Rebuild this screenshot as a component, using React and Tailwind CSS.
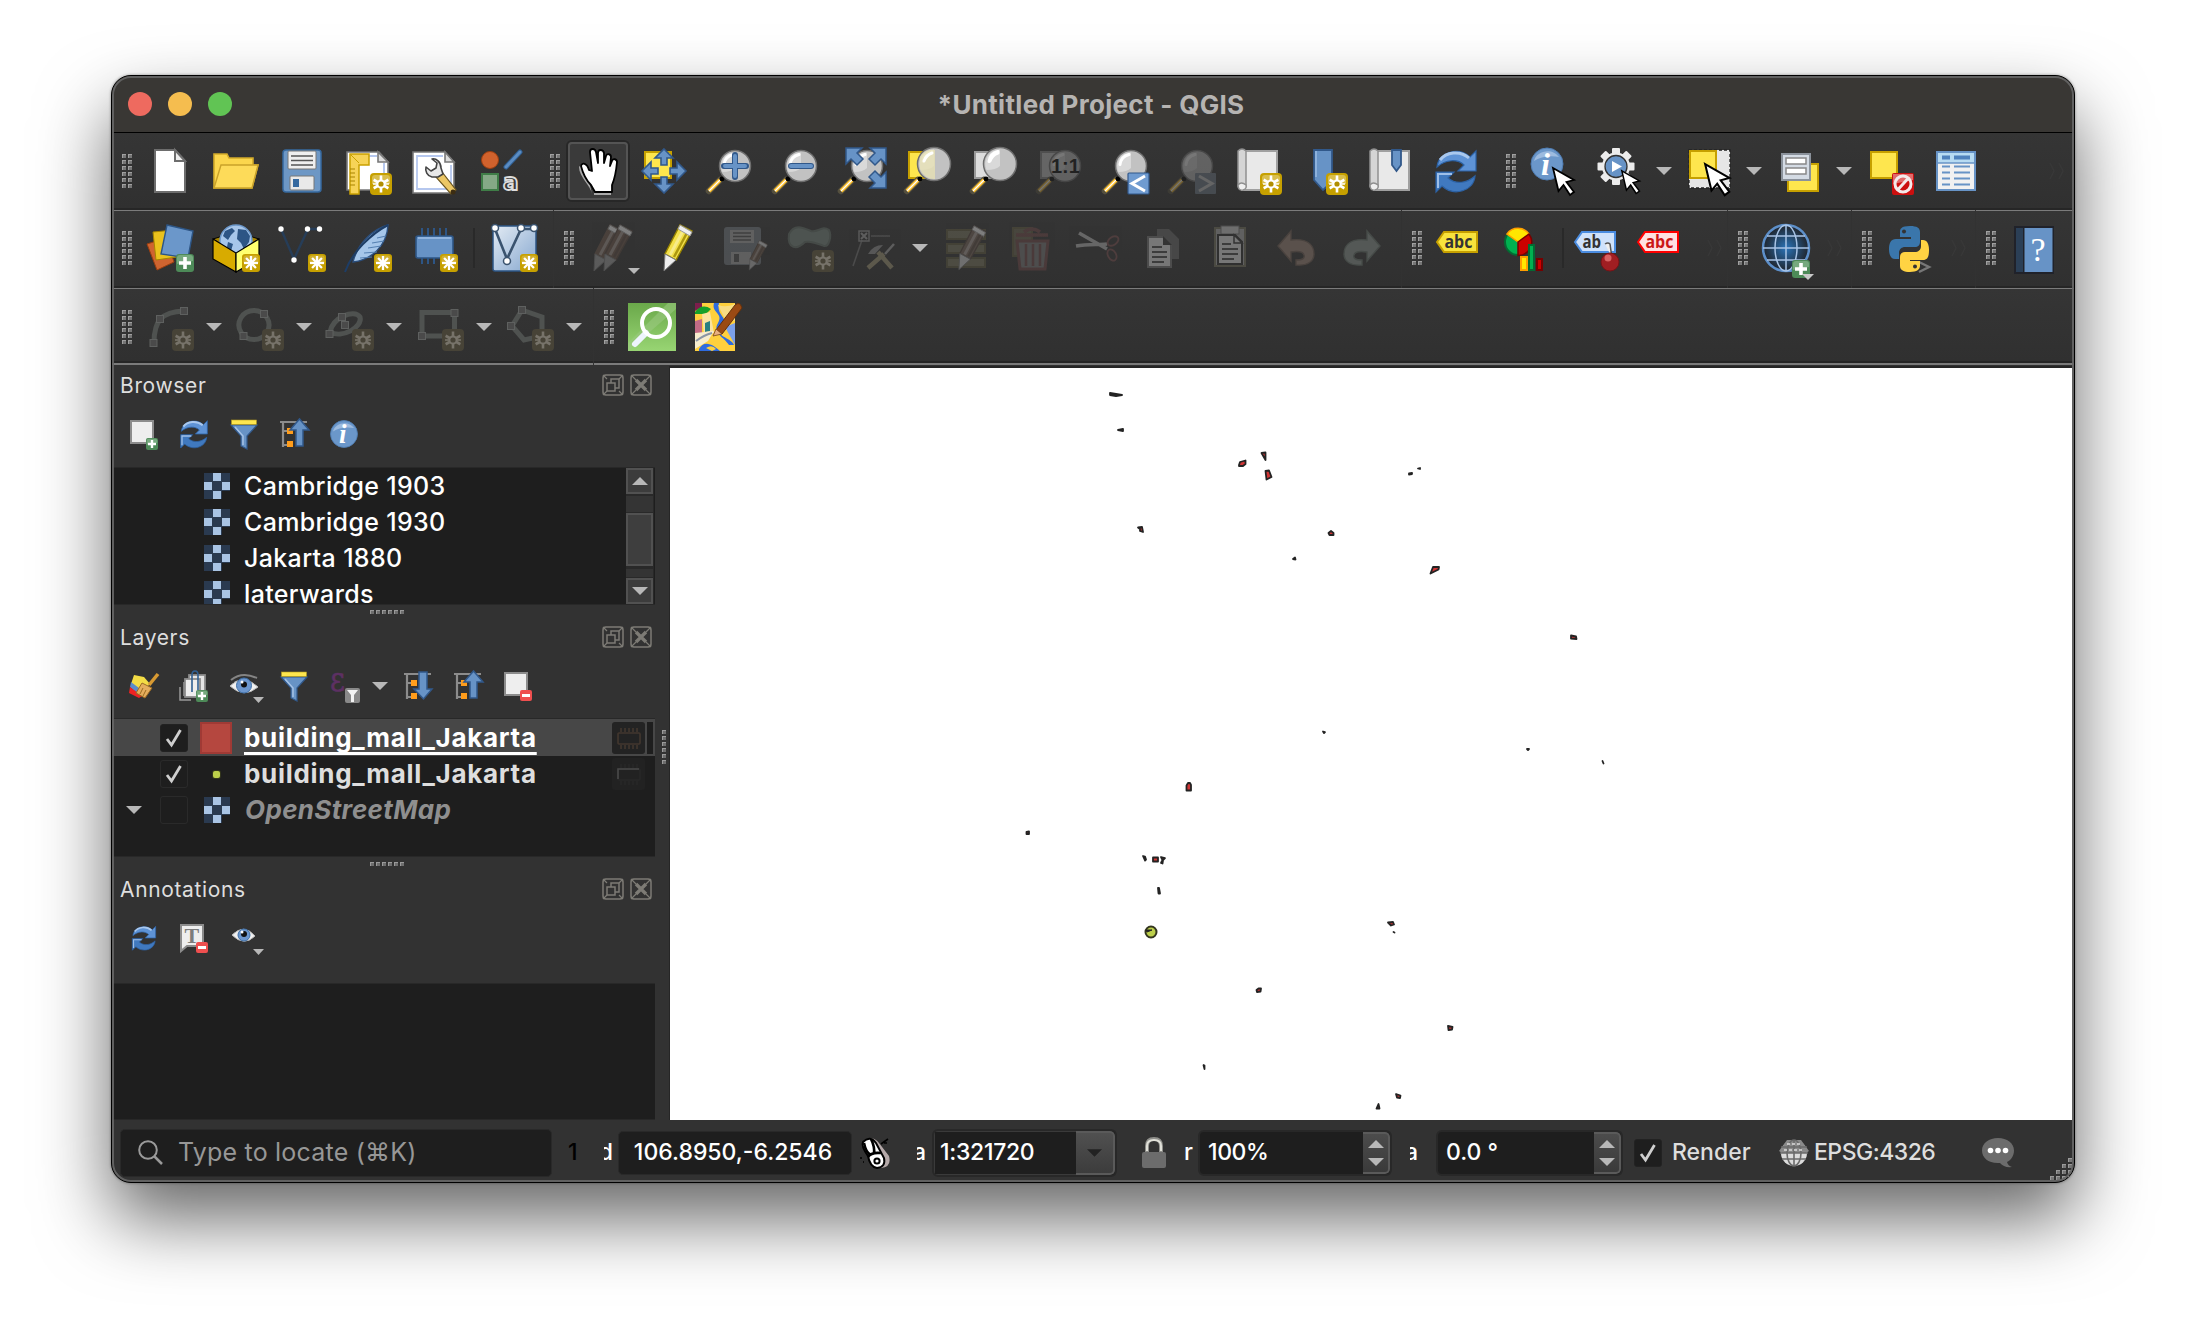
import React from "react";

/* ---------- shared drawing helpers ---------- */

function Svg({ size = 48, box = 48, dim, children }) {
  return (
    <svg width={size} height={size} viewBox={`0 0 ${box} ${box}`} fill="none" opacity={dim ? dim : 1} className="shrink-0 overflow-visible">
      {children}
    </svg>
  );
}

function Star({ x = 26, y = 26, dull }) {
  const c = dull ? "#77736a" : "#fff";
  return (
    <g transform={`translate(${x} ${y})`}>
      <rect width="22" height="22" rx="4" fill={dull ? "#474337" : "#c6a000"} />
      {!dull && <path d="M2 11V5q0-3 3-3h12q3 0 3 3v6z" fill="#d9be4c" />}
      {[0, 60, 120].map((a) => (
        <path key={a} d="M11 2.5V19.5" stroke={c} strokeWidth="2.6" transform={`rotate(${a} 11 11)`} />
      ))}
      <path d="M3 11H19" stroke={c} strokeWidth="1.6" />
      <circle cx="11" cy="11" r="3.6" fill={dull ? "#474337" : "#b08e00"} stroke={c} strokeWidth="2" />
    </g>
  );
}

function Asterisk() {
  return (
    <g transform="translate(30 30)">
      <rect width="18" height="18" rx="3" fill="#c6a000" />
      <path d="M1.5 9V4q0-2.500 2.500-2.500h10q2.500 0 2.500 2.500v5z" fill="#d2b02e" />
      {[0, 45, 90, 135].map((a) => (
        <path key={a} d="M9 2V16" stroke="#fff" strokeWidth="2.300" transform={`rotate(${a} 9 9)`} />
      ))}
    </g>
  );
}

function PlusBadge({ x = 30, y = 30, s = 18 }) {
  return (
    <g transform={`translate(${x} ${y}) scale(${s / 18})`}>
      <rect width="18" height="18" rx="3" fill="#4d8a58" />
      <path d="M1 10V4q0-3 3-3h10q3 0 3 3v3z" fill="#76a97e" />
      <path d="M9 3V15M3 9H15" stroke="#fff" strokeWidth="3.600" />
    </g>
  );
}

function MinusBadge({ x = 20, y = 20 }) {
  return (
    <g transform={`translate(${x} ${y})`}>
      <rect width="12" height="11" rx="2" fill="#ef4f4f" />
      <path d="M2 5.500H10" stroke="#fff" strokeWidth="3" />
    </g>
  );
}

function Lens({ cx = 29, cy = 19, r = 15.500, handle = "M3 44L14 33" }) {
  return (
    <g>
      <path d={handle} stroke="#55503f" strokeWidth="6.500" strokeLinecap="round" />
      <path d={handle} stroke="#fbbf2d" strokeWidth="4" />
      <path d={handle} stroke="#fff" strokeWidth="1.200" />
      <circle cx="16" cy="32" r="2.400" fill="#000" />
      <circle cx={cx} cy={cy} r={r} fill="#c2c2c2" stroke="#6e6e6e" strokeWidth="1.500" />
      <path d={`M${cx} ${cy - r + 2}a${r - 2} ${r - 2} 0 0 0 -${r - 3} ${r + 4}q${r - 7} 0 ${r - 3} -4z`} fill="#e2e2e2" opacity=".7" />
      <path d={`M${cx - 2} ${cy - r + 4}q-8 2 -9 10`} stroke="#fff" strokeWidth="3" strokeLinecap="round" />
    </g>
  );
}

function Cursor({ t = "translate(21 20)" }) {
  return (
    <path transform={t} d="M1 1L22 13L14.500 15L22 25L18 28L11.500 18L6.500 24Z" fill="#fff" stroke="#000" strokeWidth="1.800" />
  );
}

function Swirl({ size = 48 }) {
  return (
    <Svg size={size}>
      <path d="M5 20C6 6 26-1 38 10l6-6v20H26l6-6C26 12 14 12 5 20z" fill="#5e93d6" stroke="#2c62a5" strokeWidth="1.200" />
      <path d="M8 13C14 5 28 3 37 11" stroke="#a9c8ee" strokeWidth="3" />
      <path d="M43 29C42 44 22 50 10 39l-6 6V25h18l-6 6C24 38 35 36 43 29z" fill="#4079bf" stroke="#2c62a5" strokeWidth="1.200" />
      <path d="M6 41V27H20" stroke="#9ebfe8" strokeWidth="2" />
    </Svg>
  );
}

function Caret({ className = "w-6 pr-[2px]", small }) {
  return (
    <div className={`flex shrink-0 justify-center ${className}`}>
      <svg width={small ? 12 : 16} height={small ? 6 : 8} viewBox="0 0 16 8">
        <path d="M0 0H16L8 8Z" fill="#b8b8b8" />
      </svg>
    </div>
  );
}

function Grip() {
  return (
    <div className="mr-[5px] ml-[10px] grid shrink-0 grid-cols-2 gap-x-[2px] gap-y-[2px]">
      {Array.from({ length: 12 }).map((_, i) => (
        <i key={i} className="size-1 border-t border-l border-[#a0a0a0] bg-[#767676]" />
      ))}
    </div>
  );
}

function Dots({ vertical }) {
  return (
    <div className={vertical ? "flex flex-col gap-[2px]" : "flex gap-[2px]"}>
      {Array.from({ length: 6 }).map((_, i) => (
        <i key={i} className="size-1 border-t border-l border-[#9a9a9a] bg-[#6e6e6e]" />
      ))}
    </div>
  );
}

function Toolbar({ className, children, first, last, pad = "" }) {
  return (
    <div className={`flex flex-col ${className}`}>
      <div className={`h-px shrink-0 ${first ? "bg-black" : "bg-[#7b7b7b]"}`} />
      <div className={`flex min-h-0 flex-1 items-center overflow-hidden bg-linear-to-b from-[#353535] to-[#303030] ${pad}`}>{children}</div>
      <div className="h-[2px] shrink-0 bg-[#262626]" />
      {last && <div className="h-[2px] shrink-0 bg-[#7b7b7b]" />}
    </div>
  );
}

function Tool({ children, className = "w-[66px]" }) {
  return <div className={`relative flex shrink-0 justify-center ${className}`}>{children}</div>;
}

function More({ className }) {
  return (
    <svg width="20" height="20" viewBox="0 0 20 20" className={`shrink-0 ${className}`} fill="none">
      <path d="M3 2l4 8-4 8M12 2l4 8-4 8" stroke="#383838" strokeWidth="1.500" />
    </svg>
  );
}

function Sep({ className = "w-[14px]" }) {
  return (
    <div className={`flex h-10 shrink-0 justify-center ${className}`}>
      <div className="w-[2px] bg-[#292929]" />
    </div>
  );
}

/* ---------- row one icons ---------- */

const NewDoc = () => (
  <Svg>
    <path d="M9 3H29L39 14V45H9Z" fill="#fff" stroke="#6d6d6d" strokeWidth="2" />
    <path d="M29 3V14H39Z" fill="#eee" stroke="#6d6d6d" strokeWidth="2" />
  </Svg>
);
const Folder = () => (
  <Svg>
    <path d="M2 41V7H15L17 11H41V18H46L40 41Z" fill="#fbd64d" stroke="#d2aa2a" strokeWidth="1.600" />
    <path d="M2 41L9 18H46L40 41Z" fill="#fddb59" stroke="#c9a22a" strokeWidth="1.400" />
  </Svg>
);
const Floppy = () => (
  <Svg>
    <rect x="5" y="3" width="38" height="42" rx="3" fill="#6d97c5" stroke="#36699f" strokeWidth="1.500" />
    <rect x="10" y="4" width="28" height="18" rx="1" fill="#efefef" stroke="#777" />
    <path d="M13 9H35M13 13.500H35M13 18H35" stroke="#555" strokeWidth="1.600" />
    <rect x="12" y="29" width="24" height="14" rx="1" fill="#e9e9e9" stroke="#777" />
    <rect x="15" y="32" width="6" height="8" fill="#36699f" />
  </Svg>
);
const NewLayout = () => (
  <Svg>
    <path d="M3 5H35L44 15V43H3Z" fill="#fff" stroke="#777" strokeWidth="1.600" />
    <path d="M8 9H33M40 16V30" stroke="#b5c7ee" strokeWidth="2" />
    <path d="M34 5V15H44Z" fill="#ddd" stroke="#777" strokeWidth="1.600" />
    <path d="M6 7H25V18H15V47H6Z" fill="#f6d357" stroke="#c9a000" strokeWidth="1.500" />
    <path d="M6 22h5M6 26h5M6 30h5M6 34h5M6 38h5" stroke="#a88400" strokeWidth="1.200" />
    <path d="M7 8l8 8" stroke="#c9a000" />
    <Star />
  </Svg>
);
const LayoutManager = () => (
  <Svg>
    <path d="M3 5H35L44 15V46H3Z" fill="#fff" stroke="#777" strokeWidth="1.600" />
    <path d="M33 9H7V42H41V18" stroke="#b5c7ee" strokeWidth="1.800" />
    <path d="M35 5V15H44Z" fill="#ddd" stroke="#777" strokeWidth="1.600" />
    <path d="M25 29L32 25L46 43L41 47Z" fill="#ecc765" stroke="#6c5722" strokeWidth="1.200" />
    <path d="M22 12C26 11 31 15 31 21L33 27L28 30L22 30C17 29 15 24 16 20L21 24L26 21L27 16Z" fill="#e8e8e8" stroke="#444" strokeWidth="1.600" strokeLinejoin="round" />
    <circle cx="43" cy="45" r="2.500" fill="#3c2d12" />
  </Svg>
);
const StyleManager = () => (
  <Svg>
    <circle cx="14" cy="13" r="8.500" fill="#d1622d" stroke="#9c3e0f" />
    <path d="M30 20L44 5" stroke="#2f5f93" strokeWidth="5" strokeLinecap="round" />
    <path d="M30 20L44 5" stroke="#5b8cc2" strokeWidth="3" strokeLinecap="round" />
    <rect x="6" y="27" width="16" height="16" fill="#85a986" stroke="#3f7d47" strokeWidth="2" />
    <text x="27" y="43" fontFamily="DejaVu Sans" fontWeight="700" fontSize="23" fill="#3a3a3a" stroke="#ddd" strokeWidth="1.800">a</text>
  </Svg>
);
const Hand = () => (
  <Svg>
    <g transform="translate(3 -1)">
      <path d="M15 47C14 39 2 30 2 20c2-4 6-2 8 5" fill="#aaa" transform="translate(0 1)" />
      <path d="M18 46L14 39C10 35 6 28 4 20c1-4 6-3 8 4l3 1-2-19c0-4 5-4 6 0l2 11V7c0-4 5-4 6 0v10l2-7c1-3 5-2 5 1l-1 9 2-5c1-3 5-2 5 1-1 11-2 16-5 23v7Z" fill="#fff" stroke="#000" strokeWidth="1.800" strokeLinejoin="round" />
      <path d="M17 48H34" stroke="#aaa" strokeWidth="2" />
    </g>
  </Svg>
);
const ArrowHead = ({ r, cx = 24, cy = 24 }) => (
  <path transform={`rotate(${r} ${cx} ${cy})`} d={`M${cx} ${cy - 22}l9 9h-6v7h-6v-7h-6z`} fill="#6793c6" stroke="#31588a" strokeWidth="1.600" />
);
const PanSel = () => (
  <Svg>
    <rect x="5" y="5" width="26" height="26" fill="#fee64e" stroke="#c6a000" strokeWidth="2" />
    <g>
      <ArrowHead r={0} /><ArrowHead r={90} /><ArrowHead r={180} /><ArrowHead r={270} />
    </g>
  </Svg>
);
const ZoomIn = () => (
  <Svg>
    <Lens />
    <path d="M29 8V30M18 19H40" stroke="#31588a" strokeWidth="6" strokeLinecap="round" />
    <path d="M29 9V29M19 19H39" stroke="#6793c6" strokeWidth="4" strokeLinecap="round" />
  </Svg>
);
const ZoomOut = () => (
  <Svg>
    <Lens />
    <path d="M19 19H39" stroke="#31588a" strokeWidth="6" strokeLinecap="round" />
    <path d="M19 19H39" stroke="#6793c6" strokeWidth="4" strokeLinecap="round" />
  </Svg>
);
const DiagArrow = ({ t }) => (
  <path transform={t} d="M0 0H16L11 5L17 11L11 17L5 11L0 16Z" fill="#6793c6" stroke="#31588a" strokeWidth="1.500" />
);
const ZoomFull = () => (
  <Svg>
    <Lens />
    <DiagArrow t="translate(8 1)" />
    <DiagArrow t="translate(48 1) scale(-1 1)" />
    <DiagArrow t="translate(48 41) scale(-1 -1)" />
  </Svg>
);
const ZoomSel = ({ gray }) => (
  <Svg>
    <rect x="5" y="5" width="26" height="26" fill={gray ? "#ddd" : "#fee64e"} stroke={gray ? "#999" : "#c6a000"} strokeWidth="2" />
    <Lens cx={30} cy={17} r={16.500} />
    {!gray && <path d="M16 10a15 15 0 0 1 15-7V32a15 15 0 0 1-15-10z" fill="#e6e0b4" opacity=".8" />}
    <path d="M20 14q2-6 8-8" stroke="#fff" strokeWidth="3" strokeLinecap="round" />
  </Svg>
);
const ZoomNative = () => (
  <Svg dim={0.33}>
    <rect x="5" y="5" width="26" height="26" fill="#ccc" stroke="#888" strokeWidth="2" />
    <Lens />
    <text x="15" y="26" fontFamily="Liberation Sans" fontWeight="700" fontSize="20" fill="#000">1:1</text>
  </Svg>
);
const ZoomLast = () => (
  <Svg>
    <Lens />
    <rect x="26" y="26" width="21" height="21" rx="1" fill="#6f9bd0" stroke="#31588a" strokeWidth="1.200" />
    <path d="M43 29L30 36.500L43 44" stroke="#fff" strokeWidth="3" />
  </Svg>
);
const ZoomNext = () => (
  <Svg dim={0.33}>
    <Lens />
    <rect x="27" y="26" width="21" height="21" rx="1" fill="#73808f" />
    <path d="M31 29L44 36.500L31 44" stroke="#ccc" strokeWidth="3" />
  </Svg>
);
const Scroll = () => (
  <g>
    <path d="M8 4H43V43H8Z" fill="#e9e9e9" stroke="#a0a0a0" strokeWidth="2" />
    <path d="M4 4q4-4 8 0V39q-4-4-8 0Z" fill="#d5d5d5" stroke="#8f8f8f" strokeWidth="1.500" />
    <path d="M4 38q0 6 5 5q4-1 3-5q-5-4-8 0Z" fill="#efefef" stroke="#8f8f8f" strokeWidth="1.400" />
  </g>
);
const NewMap = () => <Svg><Scroll /><Star /></Svg>;
const NewBookmark = () => (
  <Svg>
    <path d="M14 3H32V35L23 43L14 33Z" fill="#6793c6" stroke="#31588a" strokeWidth="1.800" />
    <path d="M16 4V30" stroke="#8db1dc" strokeWidth="2" />
    <Star />
  </Svg>
);
const ShowBookmarks = () => (
  <Svg>
    <Scroll />
    <path d="M26 3H35V18L30.500 24L26 18Z" fill="#6793c6" stroke="#31588a" strokeWidth="1.800" />
  </Svg>
);
const InfoDisc = () => (
  <g>
    <circle cx="17" cy="17" r="16" fill="#6b97ca" stroke="#4f7db3" />
    <path d="M4 14C6 4 22 0 29 10C20 8 10 10 4 14z" fill="#9dbbdf" />
    <text x="11" y="28" fontFamily="Liberation Serif" fontStyle="italic" fontWeight="700" fontSize="32" fill="#fff">i</text>
  </g>
);
const Identify = () => <Svg><InfoDisc /><Cursor t="translate(22 20)" /></Svg>;
const GearPlay = () => (
  <Svg>
    {[0, 45, 90, 135].map((a) => (
      <rect key={a} x="16" y="1" width="8" height="37" rx="1" fill="#ececec" transform={`rotate(${a} 20 19.500)`} />
    ))}
    <circle cx="20" cy="19.500" r="14" fill="#ececec" />
    <circle cx="20" cy="19.500" r="11" fill="#6793c6" stroke="#333" strokeWidth="1.300" />
    <path d="M16 14L26 19.500L16 25Z" fill="#fff" />
    <Cursor t="translate(25 23) scale(.84)" />
  </Svg>
);
const SelectArea = () => (
  <Svg>
    <rect x="3" y="3" width="41" height="38" fill="#e6e6e6" stroke="#222" strokeWidth="1.300" strokeDasharray="3 2" />
    <rect x="4" y="4" width="26" height="27" fill="#fee64e" stroke="#c6a000" strokeWidth="2" />
    <Cursor t="translate(18 16) scale(1.150)" />
  </Svg>
);
const SelectByValue = () => (
  <Svg>
    <rect x="12" y="17" width="30" height="27" fill="#fee64e" stroke="#c6a000" strokeWidth="2" />
    <rect x="6" y="7" width="28" height="26" fill="#d4dbe4" stroke="#8b929b" strokeWidth="2" />
    <rect x="10" y="11" width="20" height="6" fill="#fff" stroke="#888" strokeWidth="1.500" />
    <rect x="10" y="21" width="20" height="6" fill="#fff" stroke="#888" strokeWidth="1.500" />
  </Svg>
);
const Deselect = () => (
  <Svg>
    <rect x="5" y="5" width="26" height="26" fill="#fee64e" stroke="#c6a000" strokeWidth="2" />
    <rect x="26" y="26" width="22" height="22" rx="2" fill="#cc0f0f" />
    <path d="M27 37V27H47V33z" fill="#e26a6a" />
    <circle cx="37" cy="37" r="8" stroke="#f3eaea" strokeWidth="3" />
    <path d="M32 42.500L42 31.500" stroke="#f3eaea" strokeWidth="3" />
  </Svg>
);
const Table = () => (
  <Svg>
    <rect x="5" y="5" width="38" height="38" fill="#f1f1f1" stroke="#6793c6" strokeWidth="2" />
    <rect x="6" y="6" width="36" height="10" fill="#b7dbf2" />
    <path d="M4 16H44" stroke="#6793c6" strokeWidth="1.500" />
    <path d="M10 10.500h8M22 10.500h16" stroke="#4f82bd" strokeWidth="4" />
    {[19.500, 25.500, 31.500, 37.500].map((y) => (
      <path key={y} d={`M10 ${y}h8M22 ${y}h16`} stroke="#6793c6" strokeWidth="2" />
    ))}
  </Svg>
);

/* ---------- row two icons ---------- */

const AddLayer = () => (
  <Svg>
    <path d="M1 20L20 14L28 38L11 46Z" fill="#cf6430" stroke="#9c3e0f" />
    <path d="M7 8L28 6L31 33L10 36Z" fill="#eac21d" stroke="#a68500" />
    <path d="M21 1L47 7L42 34L15 30Z" fill="#6b97ca" stroke="#2d5585" strokeWidth="1.400" />
    <PlusBadge />
  </Svg>
);
const GeoPackage = () => (
  <Svg>
    <path d="M1 15L24 8L47 15L24 30Z" fill="#a58300" stroke="#000" />
    <circle cx="24" cy="17" r="16" fill="#a7c6ea" stroke="#6b97ca" strokeWidth="1.400" />
    <path d="M13 7l7-3 3 3-4 4-3 5-5-4zM26 5l8 1 4 6-1 6-5 7-3-6-4-4zM16 18l5 2-2 7-4-4z" fill="#2d5585" />
    <path d="M1 15L24 29V48L1 35Z" fill="#d8ab00" stroke="#000" strokeWidth="1.200" />
    <path d="M47 15L24 29V48L47 35Z" fill="#ffff6f" stroke="#000" strokeWidth="1.200" />
    <Asterisk />
  </Svg>
);
const Shapefile = () => (
  <Svg>
    <path d="M3 5L16 35L30 5H41" stroke="#263d58" strokeWidth="2.400" />
    {[[3, 5], [16, 36], [29.500, 5], [41.500, 5]].map(([x, y]) => (
      <circle key={x} cx={x} cy={y} r="2.700" fill="#fff" />
    ))}
    <Asterisk />
  </Svg>
);
const Feather = () => (
  <Svg>
    <path d="M44 1C30 5 14 18 9 38C27 36 43 22 44 1Z" fill="#a5c6ea" stroke="#2b4e7c" strokeWidth="1.400" />
    <path d="M44 1C27 10 8 28 1 48" stroke="#1d3d66" strokeWidth="2" />
    <path d="M16 34l12 -1M20 29l13-1M24 24l13-2M28 19l12-2M33 14l9-2" stroke="#5580b2" strokeWidth="1.200" />
    <Asterisk />
  </Svg>
);
const Memory = () => (
  <Svg>
    <path d="M12 4V12M18 4V12M24 4V12M30 4V12M36 4V12M12 34V40M18 34V40M24 34V40" stroke="#2d5585" strokeWidth="2" />
    <rect x="6" y="12" width="37" height="22" rx="2" fill="#6793c6" stroke="#2d5585" strokeWidth="1.600" />
    <path d="M8 14H41" stroke="#90b4df" strokeWidth="2" />
    <Asterisk />
  </Svg>
);
const VirtualLayer = () => (
  <Svg>
    <defs>
      <linearGradient id="vl" x1="0" y1="0" x2="1" y2="1"><stop stopColor="#e3ebf4" /><stop offset="1" stopColor="#85a7cf" /></linearGradient>
    </defs>
    <rect x="3" y="2" width="43" height="45" rx="2" fill="url(#vl)" stroke="#2d5585" strokeWidth="1.500" />
    <path d="M5 5L17 35L31 5H44" stroke="#3a536f" strokeWidth="2.600" />
    {[[5, 4], [17, 37], [31, 4], [44, 4]].map(([x, y]) => (
      <circle key={x} cx={x} cy={y} r="3.500" fill="#fff" stroke="#3a536f" strokeWidth="1.500" />
    ))}
    <Asterisk />
  </Svg>
);
const PencilShape = ({ t, body, tip = "#ccc", edge }) => (
  <g transform={t}>
    <path d="M18 1L30 7L14 36L3 30Z" fill={body} stroke={edge} strokeWidth="1.400" />
    <path d="M22 5L8 31" stroke="#fff" strokeOpacity=".35" strokeWidth="3" />
    <path d="M26 7L12 33" stroke={edge} strokeOpacity=".8" strokeWidth="2.500" />
    <path d="M18 1L30 8L28 12L16 5Z" fill="#eee" stroke="#999" />
    <path d="M3 30L14 36L2 47Z" fill={tip} stroke="#777" />
  </g>
);
const Pencils = () => (
  <Svg dim={0.4}>
    <PencilShape t="translate(4 0)" body="#6b564a" edge="#6b564a" tip="#999" />
    <PencilShape t="translate(14 0)" body="#6b564a" edge="#54453d" tip="#999" />
  </Svg>
);
const Pencil = () => (
  <Svg><PencilShape t="translate(8 0)" body="#f3e04a" edge="#9a8500" tip="#eee" /></Svg>
);
const SaveEdits = () => (
  <Svg dim={0.35}>
    <rect x="4" y="3" width="37" height="38" rx="3" fill="#7d848c" />
    <rect x="10" y="6" width="24" height="13" fill="#b4b4b4" />
    <path d="M13 9H31M13 12.500H31M13 16H31" stroke="#555" strokeWidth="1.400" />
    <rect x="11" y="28" width="20" height="12" fill="#b4b4b4" />
    <rect x="14" y="30" width="5" height="8" fill="#555" />
    <PencilShape t="translate(28 16) scale(.64)" body="#7a6353" edge="#5c4a3e" />
  </Svg>
);
const AddFeature = () => (
  <Svg>
    <path d="M3 10C8 0 16 3 25 7C32 9 36 1 43 6C46 12 43 23 38 22C30 19 25 17 19 18C10 27 1 24 3 10Z" fill="#4d5350" stroke="#454a47" strokeWidth="2" />
    <Star dull />
  </Svg>
);
const VertexTool = () => (
  <Svg dim={0.36}>
    <path d="M1 42L10 16M19 12H38" stroke="#777" strokeWidth="1.600" />
    <rect x="7" y="7" width="10" height="10" stroke="#999" strokeWidth="1.500" />
    <path d="M9 9l6 6M15 9l-6 6" stroke="#aaa" strokeWidth="2" />
    <path d="M16 44L32 30M40 44L26 28" stroke="#a89e7a" strokeWidth="4.500" />
    <path d="M16 30q5-9 15-9l-8 9z" fill="#999" />
    <path d="M33 30L42 20" stroke="#aaa" strokeWidth="2.500" />
  </Svg>
);
const MultiEdit = () => (
  <Svg dim={0.4}>
    {[6, 20, 34].map((y) => <rect key={y} x="5" y={y} width="38" height="9" fill="#77735c" stroke="#5c583e" strokeWidth="2" />)}
    <PencilShape t="translate(15 1) scale(.95)" body="#77655a" edge="#54453d" />
  </Svg>
);
const Trash = () => (
  <Svg dim={0.4}>
    <path d="M5 4H24V32H5Z" fill="#66634f" stroke="#5c583e" strokeWidth="2" />
    <path d="M8 11H40M16 8q8-6 16 0" stroke="#6e4646" strokeWidth="3.500" />
    <path d="M9 17H40L37 45H12Z" fill="#777" stroke="#6e4646" strokeWidth="3" />
    <path d="M18 20V42M25 20V42M32 20V42" stroke="#6e4646" strokeWidth="2.500" />
  </Svg>
);
const Scissors = () => (
  <Svg dim={0.38}>
    <path d="M5 9L33 25M2 22C14 20 24 21 33 20" stroke="#bbb" strokeWidth="3.500" />
    <ellipse cx="39" cy="17" rx="6" ry="4" transform="rotate(-35 39 17)" stroke="#7d5050" strokeWidth="1.800" />
    <ellipse cx="38" cy="31" rx="6" ry="4" transform="rotate(60 38 31)" stroke="#7d5050" strokeWidth="1.800" />
  </Svg>
);
const Copy = () => (
  <Svg>
    <path d="M17 5H29L39 15V35H17Z" fill="#474747" />
    <path d="M8 13H23L31 21V43H8Z" fill="#777" stroke="#4c4c4c" strokeWidth="2" />
    <path d="M23 12V21H32Z" fill="#333" />
    <path d="M12 23H22M12 28H27M12 33H27M12 38H24" stroke="#3c3c3c" strokeWidth="2" />
  </Svg>
);
const Paste = () => (
  <Svg>
    <rect x="9" y="4" width="30" height="38" fill="#606060" stroke="#4b4a42" strokeWidth="2" />
    <rect x="15" y="2" width="18" height="8" fill="#6e6e6e" stroke="#4c4c4c" />
    <path d="M12 11H29L36 18V40H12Z" fill="#777" stroke="#303030" strokeWidth="2" />
    <path d="M28 11V19H36Z" fill="#777" stroke="#333" strokeWidth="1.500" />
    <path d="M16 20H25M16 25H32M16 30H32M16 35H28" stroke="#3c3c3c" strokeWidth="1.800" />
  </Svg>
);
const UndoShape = ({ c, e }) => (
  <path d="M6 22L19 7V16C34 14 42 20 42 30C42 37 36 42 24 41V36C31 36 33 34 32 31C31 27 26 27 19 28V37Z" fill={c} stroke={e} strokeWidth="1.400" />
);
const Undo = () => <Svg><UndoShape c="#5a514c" e="#4a433f" /></Svg>;
const Redo = () => <Svg><g transform="translate(48 0) scale(-1 1)"><UndoShape c="#545856" e="#464b48" /></g></Svg>;
const Label = ({ fill, edge, color, text }) => (
  <g>
    <path d="M1 18L8 8H41V28H8Z" fill={fill} stroke={edge} strokeWidth="2" />
    <text x="8.500" y="24" fontFamily="Open Sans" fontWeight="700" fontSize="18" fill={color} textLength={text.length * 9.300} lengthAdjust="spacingAndGlyphs">{text}</text>
  </g>
);
const LabelYellow = () => <Svg><Label fill="#f8e33c" edge="#c6a000" color="#333" text="abc" /></Svg>;
const LabelRed = () => <Svg><Label fill="#ffe1e1" edge="#f00" color="#cc1616" text="abc" /></Svg>;
const Diagram = () => (
  <Svg>
    <circle cx="16" cy="18" r="13" fill="#00b150" stroke="#046a33" strokeWidth="2" />
    <path d="M16 18L5 10A13.500 13.500 0 0 1 27 10Z" fill="#ffe600" stroke="#ff9d00" strokeWidth="1.500" />
    <path d="M16 18L27 10A13.500 13.500 0 0 1 16 31.500Z" fill="#c00" stroke="#700" strokeWidth="1.500" />
    <rect x="19" y="33" width="6" height="13" fill="#ffe600" stroke="#ff9d00" strokeWidth="2" />
    <rect x="27" y="21" width="5" height="25" fill="#00b150" stroke="#046a33" strokeWidth="2" />
    <rect x="35" y="35" width="5" height="11" fill="#c00" stroke="#700" strokeWidth="2" />
  </Svg>
);
const LabelPin = () => (
  <Svg>
    <Label fill="#cfe2fb" edge="#4a8ce0" color="#333" text="ab" />
    <path d="M31 20q3-2 5 0l2 14" fill="#eee" stroke="#555" strokeWidth="1.500" />
    <circle cx="36" cy="38" r="9" fill="#a01e22" stroke="#7a1216" />
    <circle cx="34" cy="34" r="3.500" fill="#d86262" />
  </Svg>
);
const Globe = () => (
  <Svg>
    <defs><radialGradient id="gl"><stop stopColor="#2a73b8" /><stop offset="1" stopColor="#20242b" /></radialGradient></defs>
    <circle cx="24" cy="24" r="23" fill="url(#gl)" stroke="#5d8fc9" strokeWidth="2.500" />
    <ellipse cx="24" cy="24" rx="11" ry="23" stroke="#a9c4e6" strokeWidth="1.500" />
    <path d="M24 1V47M1 24H47M5 12H43M5 36H43" stroke="#a9c4e6" strokeWidth="1.500" />
    <PlusBadge x={30} y={36} s={18} />
    <path d="M40 50H52L46 56Z" fill="#c9c9c9" />
  </Svg>
);
const Python = () => (
  <Svg>
    <path d="M33 46l10-5-10-5" stroke="#777" strokeWidth="2.500" transform="translate(0 2)" />
    <path d="M24 2c-9 0-10 3-10 6v5h11v2H10c-5 0-7 4-7 10s2 10 6 10h4v-6c0-4 3-6 6-6h10c3 0 5-2 5-5V8c0-4-3-6-10-6z" fill="#3a76ab" />
    <path d="M35 16v6c0 4-3 6-6 6H19c-3 0-5 2-5 5v9c0 4 4 6 10 6 7 0 10-3 10-6v-5H24v-1h13c5 0 6-4 6-10s-2-10-6-10z" fill="#ffd343" />
    <circle cx="18" cy="7.500" r="2" fill="#333" /><circle cx="29" cy="42.500" r="2" fill="#333" />
  </Svg>
);
const Help = () => (
  <Svg>
    <rect x="4" y="2" width="40" height="48" fill="#20222a" />
    <rect x="6" y="4" width="7" height="44" fill="#2b3f56" />
    <rect x="14.500" y="4" width="28" height="44" fill="#6793c6" />
    <text x="20.500" y="37" fontFamily="Liberation Serif" fontSize="34" fill="#fff">?</text>
  </Svg>
);

/* ---------- row three icons ---------- */

const Node = ({ x, y }) => <rect x={x - 3.500} y={y - 3.500} width="7" height="7" fill="#4a4a4a" stroke="#5e605f" />;
const Shape = ({ d, nodes }) => (
  <Svg>
    <path d={d} stroke="#4f5250" strokeWidth="5" />
    {nodes.map(([x, y]) => <Node key={`${x},${y}`} x={x} y={y} />)}
    <Star dull />
  </Svg>
);
const shapeTools = [
  { d: "M8 40C8 17 16 9 38 8", nodes: [[7.500, 40], [14, 16], [38, 8]] },
  { d: "M18 7.500A15 14.500 0 1 1 17.900 7.500Z", nodes: [[28, 11], [7.500, 33]] },
  { d: "M4 29C7 14 28 6 34 14C37 24 16 36 4 29Z", nodes: [[16, 14], [19, 22], [3.500, 31]] },
  { d: "M6 9.500H38.500V33H6Z", nodes: [[38.500, 10], [6, 33]] },
  { d: "M16 7L36 14V33L18 37L6 23Z", nodes: [[16, 7], [5, 23]] },
];
const GreenSearch = () => (
  <Svg>
    <defs><linearGradient id="gs" x1="0" y1="0" x2="0" y2="1"><stop stopColor="#6aa84a" /><stop offset="1" stopColor="#98d573" /></linearGradient></defs>
    <rect width="48" height="48" fill="url(#gs)" />
    <path d="M48 0V6L0 48V40L40 0Z" fill="#9ccb83" opacity=".55" />
    <path d="M7 41L18 30" stroke="#eef4fc" strokeWidth="6" strokeLinecap="round" />
    <circle cx="28" cy="20" r="14" stroke="#fff" strokeWidth="4" />
  </Svg>
);
const MapPaint = () => (
  <Svg>
    <rect x="1" y="0" width="40" height="48" fill="#ffd03d" />
    <path d="M1 0H8V4L1 8z" fill="#7c1e4b" /><path d="M1 9Q8 0 17 6L12 11L1 11z" fill="#16a02a" />
    <path d="M8 11L16 9L20 30L10 32z" fill="#fbe3a0" />
    <path d="M1 18L8 16V31L1 33z" fill="#c26b86" /><path d="M11 20L16 18V28L11 29z" fill="#2a7f82" />
    <path d="M20 0H25C22 14 36 14 28 24S37 34 40 42H35C30 34 18 30 24 20S17 10 20 0z" fill="#2e6be0" />
    <path d="M5 46C10 36 20 42 26 48H5z" fill="#2e6be0" /><path d="M12 45q6-4 10 1l-4 2z" fill="#ffd03d" />
    <path d="M31 24L41 20V42z" fill="#7ba0ea" /><path d="M24 2Q32 5 41 1V18L30 14z" fill="#f9dd84" />
    <path d="M1 30L20 28L14 38L1 46z" fill="#f7edcf" />
    <path d="M2 38q8-6 16-8" stroke="#8b95a5" strokeWidth="2" />
    <path d="M22 27L41 2Q46-2 48 5L28 31Z" fill="#9a4a14" stroke="#65300a" />
    <path d="M22 26L28 31L19 33Z" fill="#e9b07f" stroke="#7a4316" strokeWidth=".8" />
  </Svg>
);

/* ---------- panel icons, 32 px ---------- */

const AddSelected = () => (
  <Svg size={32} box={32}>
    <rect x="3" y="3" width="22" height="22" fill="#eee" stroke="#8c8c8c" strokeWidth="2" />
    <PlusBadge x={18} y={20} s={12} />
  </Svg>
);
const Funnel = () => (
  <Svg size={32} box={32}>
    <path d="M3 7H29L19 18V31L13 28V18Z" fill="#6793c6" stroke="#31588a" strokeWidth="1.200" />
    <rect x="3.500" y="2" width="25" height="4.500" fill="#fee64e" stroke="#b59b1c" strokeWidth=".6" />
    <path d="M7 9L15 18V27" stroke="#a5c2e6" strokeWidth="1.500" />
  </Svg>
);
const Tree = ({ down }) => (
  <Svg size={32} box={32}>
    <path d="M2 4H29M5 4V29M5 13H10M5 27H10" stroke="#8c8c8c" strokeWidth="2.200" />
    <rect x="9" y="10" width="6" height="6" fill="#ff9d1c" /><rect x="9" y="23" width="6" height="6" fill="#ff9d1c" />
    <path d={down ? "M17 2H25V19H30L21.500 29L12 19H17Z" : "M18 28H25V12H31L21.500 1L12 12H18Z"} fill="#6793c6" stroke="#31588a" strokeWidth="1.500" />
  </Svg>
);
const Info = () => <Svg size={32} box={38}><g transform="translate(2 2)"><InfoDisc /></g></Svg>;
const Brush = () => (
  <Svg size={32} box={32}>
    <path d="M6 5L16 7L22 14L14 22L3 14Z" fill="#f3dc45" /><path d="M3 12L15 21L12 26L2 17Z" fill="#5b8cc9" />
    <path d="M2 17L14 26L11 28L1 23Z" fill="#e22" />
    <path d="M30 4L21 15" stroke="#d89a32" strokeWidth="3.500" />
    <path d="M14 13L24 18L17 28L8 23Z" fill="#e4ad5d" stroke="#9a6a22" />
    <path d="M15 18l-3 6M18 20l-3 6" stroke="#9a6a22" />
  </Svg>
);
const AddGroup = () => (
  <Svg size={32} box={32}>
    <path d="M2 17V30H13M6 12V26" stroke="#999" strokeWidth="1.500" />
    <rect x="11" y="5" width="16" height="19" fill="#e5e5e5" stroke="#8c8c8c" strokeWidth="1.800" />
    <rect x="7" y="9" width="15" height="18" fill="#eee" stroke="#8c8c8c" strokeWidth="1.800" />
    <path d="M14 22V5q0-4 3-4t3 4V20" stroke="#2f5f93" strokeWidth="1.600" />
    <PlusBadge x={18} y={20} s={12} />
  </Svg>
);
const Eye = ({ plain }) => (
  <Svg size={32} box={32}>
    {!plain && <path d="M3 10Q14 1 29 8" stroke="#848484" strokeWidth="2" />}
    <path d={plain ? "M4 13Q16 1 27 14Q16 25 4 13Z" : "M2 16Q15 3 30 17Q16 29 2 16Z"} fill="#f1f1f1" stroke="#bbb" />
    <circle cx="16" cy={plain ? 13 : 15.500} r={plain ? 6 : 7.500} fill="#6d97ce" stroke="#3d6fa8" />
    <circle cx="16" cy={plain ? 12 : 14.500} r="3" fill="#111" /><circle cx="14" cy={plain ? 10 : 12} r="1.500" fill="#fff" />
    <path d="M25 27H36L30.500 33Z" fill="#b8b8b8" />
  </Svg>
);
const Expression = () => (
  <Svg size={32} box={32}>
    <text x="2" y="21" fontFamily="DejaVu Serif" fontSize="34" textLength="15" lengthAdjust="spacingAndGlyphs" fill="#5d3063" stroke="#5d3063" strokeWidth=".6">ε</text>
    <rect x="17" y="18" width="15" height="15" rx="2" fill="#898989" />
    <path d="M19 20H30L26 25V32H23V25Z" fill="#f2f2f2" />
  </Svg>
);
const RemoveLayer = () => (
  <Svg size={32} box={32}>
    <rect x="3" y="3" width="22" height="22" fill="#eee" stroke="#8c8c8c" strokeWidth="2" />
    <MinusBadge x={18} y={20} />
  </Svg>
);
const RemoveText = () => (
  <Svg size={32} box={32}>
    <path d="M3 3H25V24H9L3 29Z" fill="#eee" stroke="#8c8c8c" strokeWidth="2" />
    <text x="6.500" y="21" fontFamily="Liberation Serif" fontWeight="700" fontSize="22" fill="#7c7c7c">T</text>
    <MinusBadge x={18} y={20} />
  </Svg>
);
const Checker = () => (
  <svg width="26" height="26" viewBox="0 0 26 26" className="shrink-0" shapeRendering="crispEdges">
    <rect width="26" height="26" fill="#2a3a50" />
    <path d="M9 0h8v8h-8zM0 9h8v8H0zM18 9h8v8h-8zM9 18h8v8h-8z" fill="#a9c4e4" />
    <path d="M18 18h8v8h-8z" fill="#1e1e1e" />
  </svg>
);

/* ---------- panels ---------- */

function PanelHeader({ title, className }) {
  return (
    <div className={`flex shrink-0 items-center pr-[3px] pl-2 ${className}`}>
      <span className="flex-1 pt-[2px] text-[21px] tracking-[0.65px] text-[#dedede]">{title}</span>
      <svg width="50" height="22" viewBox="0 0 50 22" fill="none" stroke="#7d7b75" strokeWidth="1.500">
        <rect x="1" y="1" width="20" height="20" rx="3" /><rect x="29" y="1" width="20" height="20" rx="3" />
        <path d="M5 9H13V17H5ZM9 9V5H17V14H13" />
        <path d="M1 1l4 4M21 1l-4 4M1 21l4-4M21 21l-4-4M29 1l5 5M49 1l-5 5M29 21l5-5M49 21l-5-5" strokeWidth="1.200" />
        <path d="M34 6l10 10M44 6L34 16" strokeWidth="3.400" />
      </svg>
    </div>
  );
}

function SmallTool({ children }) {
  return <div className="flex h-8 w-[50px] shrink-0 justify-center">{children}</div>;
}

function Splitter() {
  return <div className="flex h-[14px] shrink-0 items-center justify-center pl-[7px]"><Dots /></div>;
}

function ScrollButton({ up }) {
  return (
    <div className="flex h-[26px] shrink-0 items-center justify-center border-2 border-[#515151] bg-[#3c3c3c]">
      <svg width="16" height="8" viewBox="0 0 16 8"><path d={up ? "M0 8H16L8 0Z" : "M0 0H16L8 8Z"} fill="#b8b8b8" /></svg>
    </div>
  );
}

function Check({ on, dark }) {
  return (
    <div className={`flex size-7 shrink-0 items-center justify-center rounded-[3px] border ${dark ? "border-[#222] bg-[#1e1e1e]" : "border-[#2a2a2a]"}`}>
      {on && (
        <svg width="18" height="20" viewBox="0 0 18 20" fill="none"><path d="M2 11L6.500 17L15.500 2" stroke="#cfcfcf" strokeWidth="2.800" /></svg>
      )}
    </div>
  );
}

function ChipIcon({ faint }) {
  return (
    <div className={`flex h-8 w-[33px] shrink-0 items-center justify-center rounded-[3px] ${faint ? "bg-[#222]" : "bg-[#232323]"}`}>
      <svg width="24" height="24" viewBox="0 0 24 24" fill="none" stroke={faint ? "#282828" : "#43372f"} strokeWidth="1.600">
        <rect x="1" y="7" width="22" height="11" rx="1" />
        <path d="M4 2V6M8 2V6M12 2V6M16 2V6M20 2V6M4 19V23M8 19V23M12 19V23M16 19V23M20 19V23" />
        {faint && <path d="M1 17V7H22" stroke="#4a4a4a" />}
      </svg>
    </div>
  );
}

function Sidebar() {
  return (
    <div className="flex w-[543px] shrink-0 flex-col">
      <PanelHeader title="Browser" className="h-10" />
      <div className="flex h-[62px] shrink-0 pt-[13px] pl-[7px]">
        <SmallTool><AddSelected /></SmallTool>
        <SmallTool><Swirl size={32} /></SmallTool>
        <SmallTool><Funnel /></SmallTool>
        <SmallTool><Tree /></SmallTool>
        <SmallTool><Info /></SmallTool>
      </div>
      <div className="flex h-[138px] shrink-0 border-y border-[#282828] bg-[#1e1e1e]">
        <div className="flex-1 overflow-hidden">
          {["Cambridge 1903", "Cambridge 1930", "Jakarta 1880", "laterwards"].map((name) => (
            <div key={name} className="flex h-9 items-center gap-[14px] pl-[92px]">
              <Checker />
              <span className="pt-[2px] text-[25px] font-medium tracking-[0.35px] text-white">{name}</span>
            </div>
          ))}
        </div>
        <div className="mr-px flex w-7 shrink-0 flex-col border-r border-[#282828] bg-[#292929]">
          <ScrollButton up />
          <div className="mt-[2px] h-4 bg-[#343434]" />
          <div className="my-px h-[53px] border-2 border-[#515151] bg-[#3e3e3e]" />
          <div className="mt-[2px] mb-px flex-1 bg-[#343434]" />
          <ScrollButton />
        </div>
      </div>
      <Splitter />

      <PanelHeader title="Layers" className="h-9" />
      <div className="flex h-[63px] shrink-0 pt-[15px] pl-[7px]">
        <SmallTool><Brush /></SmallTool>
        <SmallTool><AddGroup /></SmallTool>
        <SmallTool><Eye /></SmallTool>
        <SmallTool><Funnel /></SmallTool>
        <SmallTool><Expression /></SmallTool>
        <Caret className="h-8 w-6 items-center pr-[2px]" />
        <SmallTool><Tree down /></SmallTool>
        <SmallTool><Tree /></SmallTool>
        <SmallTool><RemoveLayer /></SmallTool>
      </div>
      <div className="h-[139px] shrink-0 border-y border-[#282828] bg-[#1e1e1e]">
        <div className="flex h-[37px] items-center bg-[#474747] pl-12">
          <Check on dark />
          <div className="mr-3 ml-3 size-8 border-2 border-[#a03a35] bg-[#b5473f]" />
          <span className="flex-1 text-[26px] leading-9 font-bold tracking-[0.7px] text-white underline decoration-[3px] underline-offset-[5px] [text-decoration-skip-ink:none]">building_mall_Jakarta</span>
          <ChipIcon />
          <div className="mr-[2px] ml-[2px] h-8 w-[6px] bg-[#1e1e1e]" />
        </div>
        <div className="flex h-9 items-center pl-12">
          <Check on />
          <div className="mr-3 ml-3 flex w-8 justify-center"><i className="size-[7px] rounded-[2px] bg-[#bccf4a] ring-1 ring-[#33361c]" /></div>
          <span className="flex-1 text-[26px] leading-9 font-bold tracking-[0.7px] text-[#dedede]">building_mall_Jakarta</span>
          <ChipIcon faint />
          <div className="w-[10px]" />
        </div>
        <div className="flex h-9 items-center">
          <Caret className="ml-[10px] w-6" />
          <div className="ml-[14px]"><Check /></div>
          <div className="mr-[15px] ml-4"><Checker /></div>
          <span className="text-[26px] leading-9 font-bold tracking-[0.35px] text-[#8f8f8f] italic">OpenStreetMap</span>
        </div>
      </div>
      <Splitter />

      <PanelHeader title="Annotations" className="h-9" />
      <div className="flex h-[76px] shrink-0 pt-[15px] pl-[7px]">
        <SmallTool><div className="pt-[2px]"><Swirl size={28} /></div></SmallTool>
        <SmallTool><RemoveText /></SmallTool>
        <SmallTool><Eye plain /></SmallTool>
      </div>
      <div className="flex-1 border-y border-[#282828] bg-[#1e1e1e]" />
    </div>
  );
}

/* ---------- map ---------- */

const buildings = [
  "1110,393 1122,395 1116,396 1110,395", "1118,430 1123,429 1123,431", "1239,465 1240,462 1245.500,460.500 1245.500,464 1243,466 1239,466",
  "1261.500,453 1265.500,452.500 1265.500,460", "1265.500,471 1269,470.500 1271.500,477 1266.500,479.500", "1409,473.500 1412,473 1412,474 1409,474.500",
  "1418,468.500 1420,468 1420,469", "1138,527.500 1142,527 1143,532 1140,531 1140,529", "1328.500,533 1331,531 1333.500,533 1333.500,535 1329.500,535",
  "1293,559 1295,557.500 1295.500,559.500", "1430.500,573.500 1433,567 1439,567 1438.500,569.500", "1571,635.500 1576,636.500 1576.500,639 1571,638.500",
  "1323,731.500 1325,732 1324,733", "1527,749 1529,749 1528,750", "1602.500,761 1603.500,763.500", "1186.500,785.500 1188,783 1190,783 1191,785 1191,790.500 1186.500,790.500",
  "1026.500,832 1029,831.500 1029,834 1026.500,834", "1143,856 1145,856.500 1146,859.500 1145,860.500", "1153,857.500 1158,857.500 1158,861.500 1153,861.500",
  "1161,857 1165,858 1163,860 1162.500,863.500 1161,863 1162.500,860", "1158,888 1159,888 1160,893.500 1158.500,893.500", "1388,922.500 1393,922 1394,924.500 1391,925.500", "1393.500,932 1394.500,932.500",
  "1256.500,990 1258.500,988.500 1261,988.500 1260.500,991.500 1257,992", "1448,1026 1452.500,1027 1452,1029.500 1448.500,1030", "1203.500,1065 1204.500,1065.500 1204.500,1069",
  "1396,1094 1400.500,1095.500 1400,1098 1397,1097.500", "1378.500,1104 1379.500,1108.500 1376.500,1108.500",
];

function MapCanvas() {
  return (
    <div className="mt-px mr-[2px] flex-1 border-t-2 border-l border-[#262626] bg-white">
      <svg width="1402" height="752" viewBox="670 368 1402 752" className="block">
        {buildings.map((p) => (
          <polygon key={p} points={p} fill="#d03535" stroke="#232323" strokeWidth="1.800" strokeLinejoin="round" />
        ))}
        <circle cx="1151" cy="932" r="5.500" fill="#bccf4a" stroke="#34361f" strokeWidth="2" />
        <path d="M1146 930L1152 930L1147 932Z" fill="#232323" stroke="#232323" />
      </svg>
    </div>
  );
}

/* ---------- status bar ---------- */

function Spin({ text, className, pad }) {
  return (
    <div className={`flex h-[46px] shrink-0 items-stretch overflow-hidden rounded-[6px] border-2 border-[#282828] bg-[#1e1e1e] ${className}`}>
      <div className={`flex flex-1 items-center text-white ${pad}`}>{text}</div>
      <div className="flex w-[27px] flex-col items-center justify-center gap-[10px] rounded-r-[5px] border-2 border-l-0 border-[#5a5a5a] bg-linear-to-b from-[#4c4c4c] to-[#3a3a3a]">
        <svg width="16" height="8" viewBox="0 0 16 8"><path d="M0 8H16L8 0Z" fill="#b8b8b8" /></svg>
        <svg width="16" height="8" viewBox="0 0 16 8"><path d="M0 0H16L8 8Z" fill="#b8b8b8" /></svg>
      </div>
    </div>
  );
}

function StatusBar() {
  return (
    <div className="flex h-[62px] shrink-0 items-center bg-[#323232] pt-[3px] text-[23px] font-medium whitespace-nowrap">
      <div className="ml-2 flex h-12 w-[432px] shrink-0 items-center rounded-[5px] border border-[#292929] bg-[#1e1e1e] pl-[17px] text-[25px] font-normal text-[#979797]">
        <svg width="25" height="25" viewBox="0 0 25 25" fill="none" stroke="#9a9a9a" strokeWidth="2">
          <circle cx="10" cy="10" r="8.800" /><path d="M16 16L24 24" strokeWidth="2.500" />
        </svg>
        <span className="ml-[15px] tracking-[0.2px]">Type to locate (⌘K)</span>
      </div>
      <div className="ml-[16px] w-[14px] shrink-0 text-black">1</div>
      <div className="ml-[22px] flex w-[9px] shrink-0 justify-end overflow-hidden text-white">d</div>
      <div className="ml-[5px] flex h-[44px] w-[234px] shrink-0 items-center justify-center rounded-[5px] border border-[#292929] bg-[#1e1e1e] pr-1 text-white">106.8950,-6.2546</div>
      <svg width="32" height="34" viewBox="0 0 32 34" className="ml-[7px] shrink-0" fill="none">
        <path d="M5 5Q2 10 10 21Q12 32 20 32Q31 31 28 20L18 7Q12-1 5 5Z" fill="#b5a9a9" transform="translate(2 0)" />
        <path d="M4 6Q2 10 9 20Q11 31 18 32Q27 31 25 22L17 7Q11-1 4 6Z" fill="#fff" stroke="#000" strokeWidth="2" />
        <path d="M5 7q2 10 7 12M12 3q4 8 3 15M9 21Q12 16 22 17" stroke="#000" strokeWidth="2.600" />
        <circle cx="18" cy="25" r="2.600" stroke="#000" strokeWidth="2" /><path d="M22 8l7-5M25 7h3M1 22h2M4 26h1" stroke="#000" strokeWidth="1.600" />
      </svg>
      <div className="ml-[26px] flex w-[9px] shrink-0 justify-end overflow-hidden text-white">a</div>
      <div className="ml-[6px] flex h-12 w-[185px] shrink-0 items-stretch overflow-hidden rounded-[6px] border-2 border-[#282828] bg-[#1e1e1e]">
        <div className="flex flex-1 items-center border border-r-0 border-[#3a3a3a] pl-[5px] tracking-[-0.3px] text-white">1:321720</div>
        <div className="flex w-[39px] items-center justify-center rounded-r-[5px] border-2 border-l-0 border-[#5a5a5a] bg-linear-to-b from-[#505050] to-[#3c3c3c]">
          <svg width="15" height="8" viewBox="0 0 16 8"><path d="M0 0H16L8 8Z" fill="#222" /></svg>
        </div>
      </div>
      <svg width="24" height="32" viewBox="0 0 24 32" className="ml-[25px] shrink-0" fill="none">
        <path d="M5 16V9Q5 2 12 2T19 9V16" stroke="#8e8e8a" strokeWidth="4" /><path d="M5 14V9Q5 3 12 3T19 9V14" stroke="#e0e0d8" strokeWidth="2" />
        <rect y="15" width="24" height="16" rx="2" fill="#6c6c6c" />
      </svg>
      <div className="ml-[18px] w-[9px] shrink-0 text-white">r</div>
      <Spin text="100%" className="ml-[5px] w-[194px]" pad="pl-[8px] tracking-[-0.4px]" />
      <div className="ml-[18px] flex w-[8px] shrink-0 justify-end overflow-hidden text-white">a</div>
      <Spin text="0.0 °" className="ml-[18px] w-[187px]" pad="pl-[8px]" />
      <div className="ml-[11px] shrink-0"><Check on dark /></div>
      <span className="ml-[10px] w-[75px] shrink-0 text-[#dedede]">Render</span>
      <svg width="32" height="28" viewBox="0 0 32 28" className="ml-[31px] shrink-0" fill="none">
        <circle cx="16" cy="14" r="13" fill="#dcdcdc" />
        <path d="M9 1H23L31 12L28 14H4L1 12Z" fill="#8a8a8a" />
        <path d="M3 8H29M2 14H30M4 20H28M16 1V27" stroke="#6b6b6b" strokeWidth="1.600" />
        <ellipse cx="16" cy="14" rx="7" ry="13" stroke="#6b6b6b" strokeWidth="1.600" />
        <path d="M6 11H26M9 5H23" stroke="#ddd" strokeWidth="1.600" strokeDasharray="3 2" />
      </svg>
      <span className="ml-[4px] w-[121px] shrink-0 tracking-[-0.5px] text-[#dedede]">EPSG:4326</span>
      <svg width="32" height="32" viewBox="0 0 32 32" className="ml-[47px] shrink-0">
        <path d="M16 1C25 1 32 6 32 13.500C32 19 29 23 25 25Q26 29 30 30Q22 31 18 26C7 27 0 21 0 13.500C0 6 7 1 16 1Z" fill="#6c6c6c" />
        <circle cx="8.500" cy="13.500" r="2.800" fill="#fff" /><circle cx="16" cy="13.500" r="2.800" fill="#fff" /><circle cx="23.500" cy="13.500" r="2.800" fill="#fff" />
      </svg>
      <div className="mt-auto mr-[2px] ml-auto flex flex-col items-end gap-[2px] pb-[2px]">
        {[1, 2, 3, 4].map((n) => (
          <div key={n} className="flex gap-[2px]">
            {Array.from({ length: n }).map((_, i) => <i key={i} className="size-1 border-t border-l border-[#9a9a9a] bg-[#767676]" />)}
          </div>
        ))}
      </div>
    </div>
  );
}

/* ---------- window ---------- */

export default function App() {
  return (
    <div className="h-[1330px] w-[2186px] overflow-hidden bg-white pt-[75px] pl-[111px] font-['Inter','DejaVu_Sans',sans-serif]">
      <div className="relative flex h-[1108px] w-[1964px] flex-col overflow-hidden rounded-[20px] border border-black bg-[#323232] shadow-[0_36px_72px_rgba(0,0,0,0.6),0_0_3px_rgba(0,0,0,0.4)]">
        <div className="flex h-14 shrink-0 items-center bg-[#393734]">
          <div className="flex w-[400px] gap-4 pl-4">
            <i className="size-6 rounded-full bg-[#ee6a5f]" />
            <i className="size-6 rounded-full bg-[#f5bd4f]" />
            <i className="size-6 rounded-full bg-[#61c454]" />
          </div>
          <div className="flex-1 pr-[404px] text-center text-[26px] font-bold tracking-[0.3px] text-[#b6b4b2]">*Untitled Project - QGIS</div>
        </div>

        <div className="flex h-[78px] shrink-0 bg-[#323232]">
          <Toolbar first className="w-[428px]">
            <Grip />
            <Tool><NewDoc /></Tool><Tool><Folder /></Tool><Tool><Floppy /></Tool>
            <Tool><NewLayout /></Tool><Tool><LayoutManager /></Tool><Tool><StyleManager /></Tool>
          </Toolbar>
          <Toolbar first className="w-[956px]">
            <Grip />
            <Tool>
              <div className="flex h-[62px] w-16 items-center justify-center rounded-[6px] border-2 border-[#272727] bg-[#3a3a3a]">
                <div className="flex size-full items-center justify-center rounded-[4px] border-2 border-[#545454]"><Hand /></div>
              </div>
            </Tool>
            <Tool><PanSel /></Tool><Tool><ZoomIn /></Tool><Tool><ZoomOut /></Tool><Tool><ZoomFull /></Tool>
            <Tool><ZoomSel /></Tool><Tool><ZoomSel gray /></Tool><Tool><ZoomNative /></Tool>
            <Tool><ZoomLast /></Tool><Tool><ZoomNext /></Tool><Tool><NewMap /></Tool>
            <Tool><NewBookmark /></Tool><Tool><ShowBookmarks /></Tool><Tool><Swirl /></Tool>
          </Toolbar>
          <Toolbar first className="flex-1">
            <Grip />
            <Tool><Identify /></Tool>
            <Tool><GearPlay /></Tool><Caret />
            <Tool><SelectArea /></Tool><Caret />
            <Tool><SelectByValue /></Tool><Caret />
            <Tool><Deselect /></Tool>
            <Tool><Table /></Tool>
            <More className="ml-[58px]" />
          </Toolbar>
        </div>

        <div className="flex h-[78px] shrink-0 gap-px">
          <Toolbar pad="pb-[2px]" className="w-[441px]">
            <Grip />
            <Tool><AddLayer /></Tool><Tool><GeoPackage /></Tool><Tool><Shapefile /></Tool>
            <Tool><Feather /></Tool><Tool><Memory /></Tool><Sep /><Tool><VirtualLayer /></Tool>
          </Toolbar>
          <Toolbar pad="pb-[2px]" className="w-[847px]">
            <Grip />
            <Tool>
              <Pencils />
              <div className="absolute top-[44px] right-0"><Caret small className="w-[22px]" /></div>
            </Tool>
            <Tool><Pencil /></Tool><Tool><SaveEdits /></Tool><Tool><AddFeature /></Tool>
            <Tool><VertexTool /></Tool><Caret />
            <Tool><MultiEdit /></Tool><Tool><Trash /></Tool><Tool><Scissors /></Tool>
            <Tool><Copy /></Tool><Tool><Paste /></Tool><Tool><Undo /></Tool><Tool><Redo /></Tool>
          </Toolbar>
          <Toolbar pad="pb-[2px]" className="w-[325px]">
            <Grip />
            <Tool><LabelYellow /></Tool><Tool className="w-[66px]"><Diagram /></Tool><Sep className="w-[8px]" />
            <Tool className="w-[62px]"><LabelPin /></Tool><Tool className="w-[64px]"><LabelRed /></Tool>
            <More className="ml-[12px]" />
          </Toolbar>
          <Toolbar pad="pb-[2px]" className="w-[123px]"><Grip /><Tool><Globe /></Tool><More className="ml-[6px]" /></Toolbar>
          <Toolbar pad="pb-[2px]" className="w-[123px]"><Grip /><Tool><Python /></Tool><More className="ml-[6px]" /></Toolbar>
          <Toolbar pad="pb-[2px]" className="flex-1"><Grip /><Tool><Help /></Tool></Toolbar>
        </div>

        <div className="flex h-[77px] shrink-0 gap-px">
          <Toolbar last pad="pt-[3px]" className="w-[481px]">
            <Grip />
            {shapeTools.map((s) => (
              <React.Fragment key={s.d}><Tool><Shape {...s} /></Tool><Caret /></React.Fragment>
            ))}
          </Toolbar>
          <Toolbar last pad="pt-[3px]" className="flex-1">
            <Grip />
            <Tool><GreenSearch /></Tool><Tool><MapPaint /></Tool>
          </Toolbar>
        </div>

        <div className="flex h-[755px] shrink-0">
          <Sidebar />
          <div className="flex w-[14px] shrink-0 items-center justify-center pt-[8px] pl-1">
            <Dots vertical />
          </div>
          <MapCanvas />
        </div>

        <StatusBar />
        <div className="pointer-events-none absolute inset-0 rounded-[19px] border-2 border-[#666]/90" />
      </div>
    </div>
  );
}
